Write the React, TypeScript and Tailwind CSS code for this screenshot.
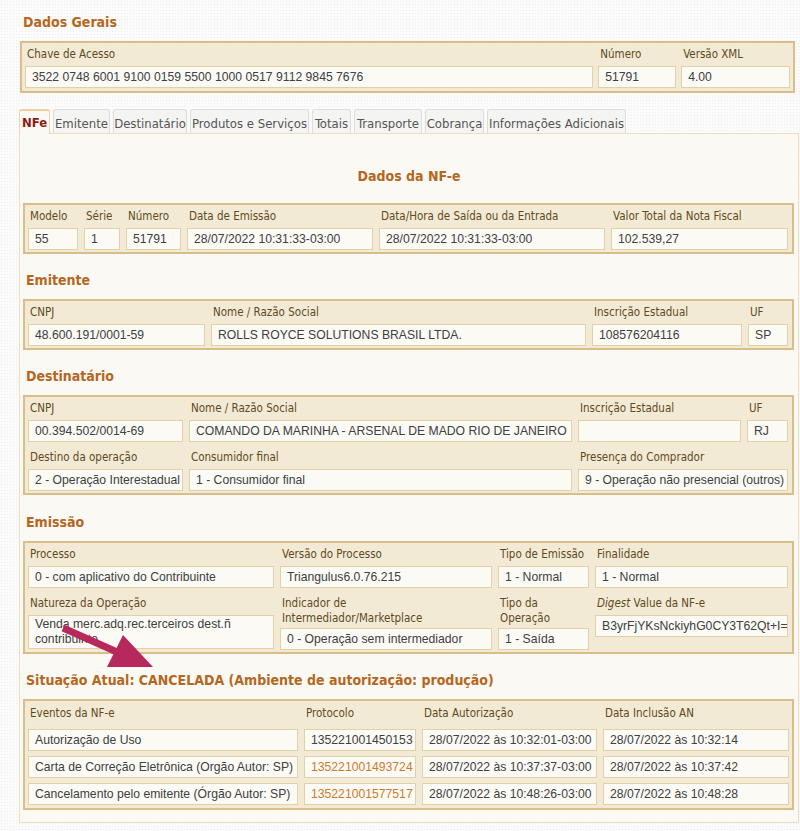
import React from "react";

const FONT_L = "font-['DejaVu_Sans_Condensed','DejaVu_Sans',sans-serif]";
const LBL_BASE = `${FONT_L} text-[11.5px] leading-[15px] text-[#5e4a1f] pl-[2px]`;
const LBL = `${LBL_BASE} whitespace-nowrap mb-[4px]`;
const VAL_BASE =
  "font-['Liberation_Sans',Arial,sans-serif] text-[12.2px] text-[#404040] border border-[#e2d0a6] bg-[#fbfaf5] pl-[6px] overflow-hidden";
const VAL = `${VAL_BASE} h-[22px] leading-[20px] whitespace-nowrap`;
const BOX = "border-2 border-[#d9be8a] bg-[#f3ead5] px-[3px] pt-[4px] pb-[2px]";
const H = `${FONT_L} font-bold text-[14px] leading-[20px] text-[#b5671f]`;

function Field({
  label,
  value,
  w,
  vClass = "",
}: {
  label: React.ReactNode;
  value: React.ReactNode;
  w: string;
  vClass?: string;
}) {
  return (
    <div className={`flex flex-col ${w}`}>
      <div className={LBL}>{label}</div>
      <div className={`${VAL} ${vClass}`}>{value}</div>
    </div>
  );
}

function Tab({ label, w, active = false }: { label: string; w: string; active?: boolean }) {
  if (active) {
    return (
      <div
        className={`${w} ${FONT_L} relative z-10 -mb-[1px] h-[25px] rounded-t-[3px] border border-b-0 border-[#f0d3ab] border-t-[2px] border-t-[#f3cf9c] bg-[#faf9f4] pt-[3px] text-center text-[13px] font-bold leading-[18px] text-[#8a1b12]`}
      >
        {label}
      </div>
    );
  }
  return (
    <div
      className={`${w} ${FONT_L} h-[24px] rounded-t-[3px] border border-b-0 border-[#dddddb] bg-[#f4f4f2] pt-[5px] text-center text-[13px] leading-[18px] text-[#555] whitespace-nowrap`}
    >
      {label}
    </div>
  );
}

export default function App() {
  return (
    <div className="relative w-[800px] min-h-[831px] bg-[#fbfbfb] [background-image:radial-gradient(circle,#eeeeee_0.8px,transparent_0.9px)] [background-size:3px_3px]">
      <div className={`${H} pl-[23px] pt-[12px]`}>Dados Gerais</div>

      <div className={`${BOX} ml-[20px] mt-[9px] w-[775px] pb-[3px]`}>
        <div className="flex gap-[5px]">
          <Field w="w-[569px]" label="Chave de Acesso" value="3522 0748 6001 9100 0159 5500 1000 0517 9112 9845 7676" />
          <Field w="w-[78px]" label="Número" value="51791" />
          <Field w="w-[109px]" label="Versão XML" value="4.00" />
        </div>
      </div>

      <div className="ml-[19px] mt-[16px] flex items-end gap-[3px]">
        <Tab label="NFe" w="w-[31px]" active />
        <Tab label="Emitente" w="w-[57px]" />
        <Tab label="Destinatário" w="w-[74px]" />
        <Tab label="Produtos e Serviços" w="w-[119px]" />
        <Tab label="Totais" w="w-[39px]" />
        <Tab label="Transporte" w="w-[68px]" />
        <Tab label="Cobrança" w="w-[59px]" />
        <Tab label="Informações Adicionais" w="w-[139px]" />
      </div>

      <div className="ml-[19px] w-[780px] border border-[#f2dcbf] bg-[#faf9f4] px-[3px] pb-[12px]">
        <div className={`${H} pt-[32px] mb-[17px] text-center`}>Dados da NF-e</div>
        <div className={`${BOX} w-[771px]`}>
          <div className="flex gap-[6px]">
            <Field w="w-[50px]" label="Modelo" value="55" />
            <Field w="w-[36px]" label="Série" value="1" />
            <Field w="w-[55px]" label="Número" value="51791" />
            <Field w="w-[186px]" label="Data de Emissão" value="28/07/2022 10:31:33-03:00" />
            <Field w="w-[226px]" label="Data/Hora de Saída ou da Entrada" value="28/07/2022 10:31:33-03:00" />
            <Field w="w-[177px]" label="Valor Total da Nota Fiscal" value="102.539,27" />
          </div>
        </div>

        <div className={`${H} pl-[3px] mt-[16px] mb-[9px]`}>Emitente</div>
        <div className={`${BOX} w-[771px]`}>
          <div className="flex gap-[6px]">
            <Field w="w-[177px]" label="CNPJ" value="48.600.191/0001-59" />
            <Field w="w-[375px]" label="Nome / Razão Social" value="ROLLS ROYCE SOLUTIONS BRASIL LTDA." />
            <Field w="w-[150px]" label="Inscrição Estadual" value="108576204116" />
            <Field w="w-[40px]" label="UF" value="SP" />
          </div>
        </div>

        <div className={`${H} pl-[3px] mt-[16px] mb-[9px]`}>Destinatário</div>
        <div className={`${BOX} w-[771px]`}>
          <div className="flex gap-[6px]">
            <Field w="w-[155px]" label="CNPJ" value="00.394.502/0014-69" />
            <Field w="w-[383px]" label="Nome / Razão Social" value="COMANDO DA MARINHA - ARSENAL DE MADO RIO DE JANEIRO" />
            <Field w="w-[163px]" label="Inscrição Estadual" value="" />
            <Field w="w-[41px]" label="UF" value="RJ" />
          </div>
          <div className="mt-[8px] flex gap-[6px]">
            <Field w="w-[155px]" label="Destino da operação" value="2 - Operação Interestadual" vClass="pl-[5px]" />
            <Field w="w-[383px]" label="Consumidor final" value="1 - Consumidor final" />
            <Field w="w-[210px]" label="Presença do Comprador" value="9 - Operação não presencial (outros)" />
          </div>
        </div>

        <div className={`${H} pl-[3px] mt-[17px] mb-[9px]`}>Emissão</div>
        <div className={`${BOX} w-[771px]`}>
          <div className="flex gap-[6px]">
            <Field w="w-[246px]" label="Processo" value="0 - com aplicativo do Contribuinte" />
            <Field w="w-[212px]" label="Versão do Processo" value="Triangulus6.0.76.215" />
            <Field w="w-[91px]" label="Tipo de Emissão" value="1 - Normal" />
            <Field w="w-[193px]" label="Finalidade" value="1 - Normal" />
          </div>
          <div className="mt-[8px] flex items-start gap-[6px]">
            <div className="flex w-[246px] flex-col">
              <div className={LBL}>Natureza da Operação</div>
              <div className={`${VAL_BASE} h-[34px] leading-[15px] pt-[1px] pr-[4px]`}>
                Venda merc.adq.rec.terceiros dest.ñ contribuinte
              </div>
            </div>
            <div className="flex w-[212px] flex-col">
              <div className={`${LBL_BASE} mb-[2px]`}>
                Indicador de
                <br />
                Intermediador/Marketplace
              </div>
              <div className={VAL}>0 - Operação sem intermediador</div>
            </div>
            <div className="flex w-[91px] flex-col">
              <div className={`${LBL_BASE} mb-[2px]`}>
                Tipo da
                <br />
                Operação
              </div>
              <div className={VAL}>1 - Saída</div>
            </div>
            <div className="flex w-[193px] flex-col">
              <div className={LBL}>
                <i>Digest</i> Value da NF-e
              </div>
              <div className={`${VAL} pl-[5px]`}>B3yrFjYKsNckiyhG0CY3T62Qt+I=</div>
            </div>
          </div>
        </div>

        <div className={`${H} pl-[3px] mt-[16px] mb-[9px]`}>
          Situação Atual: CANCELADA (Ambiente de autorização: produção)
        </div>
        <div className={`${BOX} w-[771px] pt-[5px] pb-[3px]`}>
          <div className="flex gap-[6px]">
            <div className={`${LBL} w-[270px] mb-[8px]`}>Eventos da NF-e</div>
            <div className={`${LBL} w-[112px] mb-[8px]`}>Protocolo</div>
            <div className={`${LBL} w-[175px] mb-[8px]`}>Data Autorização</div>
            <div className={`${LBL} w-[186px] mb-[8px]`}>Data Inclusão AN</div>
          </div>
          <div className="flex flex-col gap-[5px]">
            {[
              ["Autorização de Uso", "135221001450153", false, "28/07/2022 às 10:32:01-03:00", "28/07/2022 às 10:32:14"],
              ["Carta de Correção Eletrônica (Orgão Autor: SP)", "135221001493724", true, "28/07/2022 às 10:37:37-03:00", "28/07/2022 às 10:37:42"],
              ["Cancelamento pelo emitente (Órgão Autor: SP)", "135221001577517", true, "28/07/2022 às 10:48:26-03:00", "28/07/2022 às 10:48:28"],
            ].map((r, i) => (
              <div key={i} className="flex gap-[6px]">
                <div className={`${VAL} w-[270px]`}>{r[0]}</div>
                <div className={`${VAL} w-[112px] ${r[2] ? "text-[#cf7a2c]" : ""}`}>{r[1]}</div>
                <div className={`${VAL} w-[175px]`}>{r[3]}</div>
                <div className={`${VAL} w-[186px]`}>{r[4]}</div>
              </div>
            ))}
          </div>
        </div>
      </div>

      <svg className="pointer-events-none absolute left-0 top-0" width="800" height="831">
        <line x1="63" y1="628" x2="117" y2="652" stroke="#b7295d" strokeWidth="7" />
        <polygon points="123,635 153,667 107,667" fill="#b7295d" />
      </svg>
    </div>
  );
}
